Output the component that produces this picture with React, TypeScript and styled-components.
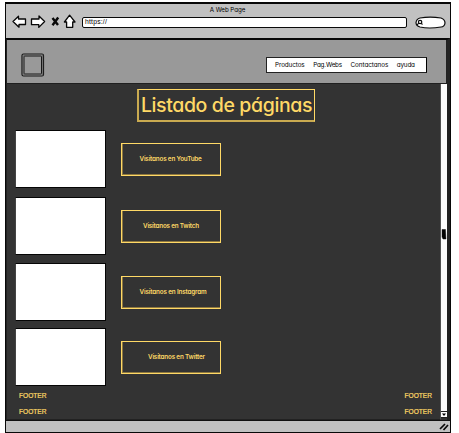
import React from "react";
import styled, { createGlobalStyle } from "styled-components";

const GlobalStyle = createGlobalStyle`
  * { box-sizing: border-box; }
  body { margin: 0; background: #fff; overflow: hidden; }
`;

const sketchFont = `Inter, "Liberation Sans", sans-serif`;
const gold = "#ffd966";

const Page = styled.div`
  width: 459px;
  height: 433px;
  padding: 2px 8px 0 5px;
  background: #fff;
  font-family: ${sketchFont};
  font-feature-settings: "cv11";
`;

const BrowserWindow = styled.div`
  width: 446px;
  height: 431px;
  display: flex;
  flex-direction: column;
  border: 1px solid #080808;
  border-top-width: 2px;
  background: #333;
`;

const Toolbar = styled.div`
  flex: 0 0 34px;
  background: #c1c1c1;
`;

const WindowTitle = styled.div`
  height: 9px;
  padding-right: 1px;
  text-align: center;
  font-size: 6.2px;
  line-height: 11px;
  letter-spacing: -0.05px;
  color: #000;
`;

const Controls = styled.div`
  display: flex;
  align-items: center;
  height: 17px;
  padding-left: 6px;
`;

const NavIcons = styled.svg`
  width: 66px;
  height: 16px;
  margin-right: 4px;
  flex: none;
`;

const AddressBar = styled.div`
  width: 325px;
  height: 11px;
  margin-top: 2px;
  padding-left: 2px;
  border: 1.5px solid #0a0a0a;
  border-radius: 2px;
  background: #fff;
  font-family: "Liberation Sans", sans-serif;
  font-size: 6.8px;
  line-height: 8px;
  letter-spacing: 0.2px;
  color: #000;
`;

const SearchBox = styled.svg`
  width: 31px;
  height: 13px;
  margin: 1px 0 0 8px;
  flex: none;
`;

const Viewport = styled.div`
  flex: 1;
  display: flex;
  flex-direction: column;
  border-top: 2px solid #090909;
  border-right: 3px solid #242424;
  border-left: 1px solid #222;
  min-height: 0;
`;

const SiteHeader = styled.header`
  flex: 0 0 44px;
  display: flex;
  align-items: flex-start;
  justify-content: space-between;
  background: #999;
  border-right: 1px solid #222;
  border-bottom: 1px solid #202020;
  padding: 13px 18px 0 14px;
`;

const Logo = styled.svg`
  width: 24px;
  height: 24px;
`;

const Menu = styled.nav`
  width: 161px;
  height: 16px;
  margin: 4px 1px 0 0;
  display: flex;
  align-items: center;
  gap: 8.5px;
  padding-left: 8px;
  background: #fff;
  border: 1px solid #222;
  border-right-color: #000;
`;

const MenuItem = styled.span<{ $track: number }>`
  font-size: 6.3px;
  line-height: 12px;
  letter-spacing: ${(p) => p.$track}px;
  color: #000;
  white-space: nowrap;
`;

const Body = styled.div`
  flex: 1;
  display: flex;
  min-height: 0;
`;

const Content = styled.main`
  flex: 1;
  display: flex;
  flex-direction: column;
  border-right: 1px solid #555;
  border-bottom: 1px solid #222;
`;

const Heading = styled.h1`
  flex: none;
  width: 178px;
  height: 33px;
  margin: 5px 0 8px 130px;
  border: 1px solid ${gold};
  border-left: 2px solid #c9aa50;
  border-bottom: 2px solid #c9aa50;
  color: ${gold};
  text-align: center;
  font-size: 19.5px;
  line-height: 30px;
  font-weight: 500;
  letter-spacing: -0.38px;
  white-space: nowrap;
`;

const Row = styled.section<{ $gap: number }>`
  flex: none;
  display: flex;
  height: 58px;
  margin: 0 0 ${(p) => p.$gap}px 8px;
`;

const Thumbnail = styled.div`
  width: 91px;
  height: 58px;
  background: #fff;
  border: 1px solid #050505;
  border-left-color: #444;
`;

const VisitButton = styled.a<{ $shift: number; $track: number }>`
  width: 100px;
  height: 33px;
  margin: 13px 0 0 15px;
  padding-left: ${(p) => p.$shift}px;
  border: 1px solid ${gold};
  box-shadow: inset 1px -1px 0 #8e7840;
  color: ${gold};
  font-size: 6.3px;
  line-height: 31px;
  font-weight: 600;
  letter-spacing: ${(p) => p.$track}px;
  white-space: nowrap;
`;

const Footer = styled.footer`
  flex: none;
  display: flex;
  flex-direction: column;
  padding: 2px 8px 0 12px;
`;

const FooterLine = styled.div`
  display: flex;
  justify-content: space-between;
  height: 16px;
  color: ${gold};
  font-family: "Liberation Sans", sans-serif;
  font-size: 6.6px;
  line-height: 16px;
  -webkit-text-stroke: 0.2px ${gold};
`;

const ScrollBar = styled.svg`
  width: 6px;
  height: 334px;
  flex: none;
`;

const StatusBar = styled.div`
  flex: 0 0 12px;
  display: flex;
  justify-content: flex-end;
  background: #c1c1c1;
  border-top: 1px solid #111;
`;

const Grip = styled.svg`
  width: 12px;
  height: 11px;
`;

const menu = [
  { label: "Productos", track: -0.08 },
  { label: "Pag.Webs", track: -0.18 },
  { label: "Contactanos", track: -0.04 },
  { label: "ayuda", track: -0.15 },
];

const channels = [
  { name: "YouTube", shift: 17.5, track: -0.18, gap: 9 },
  { name: "Twitch", shift: 21, track: -0.2, gap: 8 },
  { name: "Instagram", shift: 17.5, track: -0.15, gap: 7 },
  { name: "Twitter", shift: 26, track: -0.18, gap: 0 },
];

export default function App() {
  return (
    <Page>
      <GlobalStyle />
      <BrowserWindow>
        <Toolbar>
          <WindowTitle>A Web Page</WindowTitle>
          <Controls>
            <NavIcons viewBox="0 0 66 16" fill="#fff" stroke="#080808" strokeWidth="1.3" strokeLinejoin="round">
              <path d="M1 7.5 6.5 2.2V5H13.5V10.5L7 10.5V13.2Z" />
              <path d="M32.6 7.5 27 2V5H19.5V10.7H26.8V13.4Z" />
              <path d="M40.5 4 46 11M46.2 3.5 40.5 11.3" fill="none" strokeWidth="2.4" />
              <path d="M57.6 1.2 52.4 8H54.6V13.3H60.7V8H63Z" />
            </NavIcons>
            <AddressBar>https://</AddressBar>
            <SearchBox viewBox="0 0 31 13" fill="#fff" stroke="#0a0a0a" strokeWidth="1.2">
              <path d="M5 2Q15 .2 26 2Q30 3.5 30 7Q29.5 10.8 26 11Q14 13 5 11Q1 10 1 6.5Q1.5 3 5 2Z" />
              <circle cx="5.1" cy="6" r="1.7" />
              <path d="m3.8 7.2-2 2M6.3 7.4l1.2 1.1" />
            </SearchBox>
          </Controls>
        </Toolbar>
        <Viewport>
          <SiteHeader>
            <Logo viewBox="0 0 24 24" fill="none" stroke="#171717">
              <rect x="1" y="1" width="21.5" height="22" rx="1.5" strokeWidth="1.2" />
              <rect x="3" y="3" width="17.5" height="18" rx="0.5" />
              <path d="M1.8 2v20M2 2H22M21.7 2V22M2 22H22" stroke="#555" strokeWidth="0.6" />
            </Logo>
            <Menu>
              {menu.map((m) => (
                <MenuItem key={m.label} $track={m.track}>{m.label}</MenuItem>
              ))}
            </Menu>
          </SiteHeader>
          <Body>
            <Content>
              <Heading>Listado de páginas</Heading>
              {channels.map((c) => (
                <Row key={c.name} $gap={c.gap}>
                  <Thumbnail />
                  <VisitButton $shift={c.shift} $track={c.track}>Visítanos en {c.name}</VisitButton>
                </Row>
              ))}
              <Footer>
                <FooterLine><span>FOOTER</span><span>FOOTER</span></FooterLine>
                <FooterLine><span>FOOTER</span><span>FOOTER</span></FooterLine>
              </Footer>
            </Content>
            <ScrollBar viewBox="0 0 6 334">
              <rect width="6" height="334" fill="#fff" />
              <path d="M1 145.5H4.5L5 155H2L1 153Z" fill="#000" stroke="#111" strokeWidth="0.5" />
              <rect y="327" width="6" height="1" fill="#222" />
              <path d="M1 329.5H5L3 332Z" fill="#000" />
              <rect y="333" width="6" height="1" fill="#222" />
            </ScrollBar>
          </Body>
        </Viewport>
        <StatusBar>
          <Grip viewBox="0 0 12 11" stroke="#080808" strokeWidth="1.7" fill="none">
            <path d="M2 8 7 3M5.5 9 10 4" />
          </Grip>
        </StatusBar>
      </BrowserWindow>
    </Page>
  );
}
